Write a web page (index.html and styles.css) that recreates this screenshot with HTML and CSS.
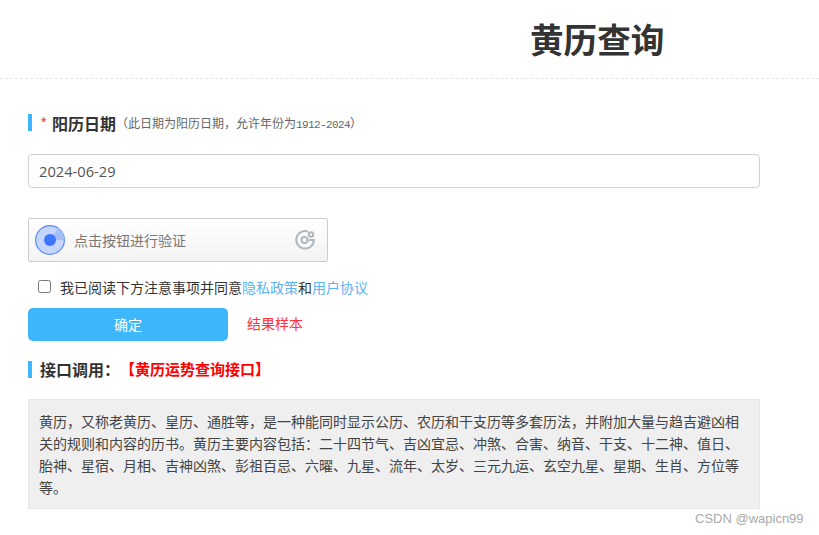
FILE: index.html
```html
<!DOCTYPE html>
<html lang="zh-CN">
<head>
<meta charset="utf-8">
<title>黄历查询</title>
<link rel="stylesheet" href="styles.css">
</head>
<body>
<header class="head"><h1 class="title">黄历查询</h1></header>
<main class="main">
  <div class="label">
    <span class="star">*</span><strong class="label-text">阳历日期</strong><span class="hint">（此日期为阳历日期，允许年份为<span class="digits">1912-2024</span>）</span>
  </div>
  <div class="input">2024-06-29</div>
  <div class="captcha">
    <svg class="radar" width="30" height="30" viewBox="0 0 30 30">
      <circle cx="15" cy="15" r="14.4" fill="#c5d5fb" stroke="#5b8cff" stroke-width="1.2"/>
      <path d="M15 15 L23.3 3.1 A14.5 14.5 0 0 1 29.5 15 Z" fill="#a5bdf6"/>
      <circle cx="15" cy="15" r="6" fill="#3d75ff"/>
    </svg>
    <span class="captcha-text">点击按钮进行验证</span>
    <svg class="logo" width="20" height="20" viewBox="0 0 20 20" fill="none" stroke="#aeb8bf" stroke-width="2">
      <path d="M13 1.5 A8.8 8.8 0 1 0 18.9 10 H13.5"/>
      <circle cx="9.5" cy="10" r="3"/>
      <circle cx="16" cy="4.5" r="2.2"/>
    </svg>
  </div>
  <label class="agree">
    <span class="box"></span>
    <span>我已阅读下方注意事项并同意<a class="link">隐私政策</a>和<a class="link">用户协议</a></span>
  </label>
  <div class="actions">
    <button class="submit" type="button">确定</button>
    <a class="sample">结果样本</a>
  </div>
  <div class="label api">
    <strong class="api-text">接口调用：</strong><span class="api-link">【黄历运势查询接口】</span>
  </div>
  <p class="desc">黄历，又称老黄历、皇历、通胜等，是一种能同时显示公历、农历和干支历等多套历法，并附加大量与趋吉避凶相关的规则和内容的历书。黄历主要内容包括：二十四节气、吉凶宜忌、冲煞、合害、纳音、干支、十二神、值日、胎神、星宿、月相、吉神凶煞、彭祖百忌、六曜、九星、流年、太岁、三元九运、玄空九星、星期、生肖、方位等等。</p>
</main>
<div class="mark">CSDN @wapicn99</div>
</body>
</html>
```
FILE: styles.css
```css
* { box-sizing: border-box; }
html, body { margin: 0; height: 100%; overflow: hidden; }
body {
  background: #fff;
  color: #333;
  font-family: "Noto Sans CJK SC", "Liberation Sans", sans-serif;
  font-size: 14px;
  position: relative;
}
.head {
  height: 79px;
  border-bottom: 1px dashed #e6e6e6;
  padding-left: 530px;
}
.title {
  margin: 0;
  font-size: 33.6px;
  line-height: 77px;
  font-weight: 700;
  color: #333;
}
.main { width: 732px; margin-left: 28px; padding-top: 35px; }
.label {
  display: flex;
  align-items: center;
  height: 17px;
  border-left: 4px solid #3eb6fc;
  padding-left: 8px;
}
.star { color: #f5503c; font-size: 16px; margin-right: 5px; width: 7px; }
.label-text { font-size: 16px; font-weight: 700; color: #333; }
.hint { font-size: 12px; line-height: 17px; color: #666; white-space: nowrap; padding-top: 2px; }
.digits { font-family: "Liberation Mono", monospace; font-size: 11px; letter-spacing: -0.6px; }
.input {
  margin-top: 23px;
  height: 34px;
  border: 1px solid #ccd0d7;
  border-radius: 4px;
  padding-left: 10px;
  line-height: 33px;
  font-size: 14.7px;
  color: #555;
  font-family: "Open Sans", "Liberation Sans", sans-serif;
}
.captcha {
  margin-top: 30px;
  width: 300px;
  height: 44px;
  border: 1px solid #ccc;
  border-radius: 2px;
  background: linear-gradient(#fff, #f3f3f3);
  display: flex;
  align-items: center;
  padding: 0 12px 0 6px;
}
.radar { flex: none; }
.captcha-text { margin-left: 9px; flex: 1; font-size: 14px; color: #777; }
.logo { flex: none; }
.agree {
  display: flex;
  align-items: center;
  height: 22px;
  margin-top: 14px;
  padding-left: 10px;
  font-size: 14px;
  color: #333;
}
.box {
  width: 13px;
  height: 13px;
  border: 1px solid #767676;
  border-radius: 2.5px;
  background: #fff;
  margin: -2px 9px 0 0;
  flex: none;
}
.link { color: #5cb3f5; }
.actions { display: flex; align-items: center; margin-top: 10px; }
.submit {
  width: 200px;
  height: 33px;
  border: 0;
  border-radius: 5px;
  background: #3eb6fc;
  color: #fff;
  font: 14px "Noto Sans CJK SC", sans-serif;
  padding: 0 0 1px;
}
.sample { margin-left: 19px; color: #f33; font-size: 14px; margin-top: -3px; }
.api { margin-top: 20px; padding-left: 8px; }
.api-text { font-size: 16px; font-weight: 700; color: #333; width: 85px; flex: none; white-space: nowrap; margin-top: -2px; }
.api-link { font-size: 15px; font-weight: 700; color: #f00; white-space: nowrap; margin: -2px 0 0 -5px; }
.desc {
  margin: 21px 0 0;
  height: 110px;
  background: #efefef;
  border: 1px solid #e6e6e6;
  padding: 10px 10px 0;
  font-size: 14px;
  line-height: 22px;
  color: #444;
}
.mark {
  position: absolute;
  left: 695px;
  top: 510px;
  font: 13px/18px "Liberation Sans", sans-serif;
  color: #a9a9a9;
}
```
